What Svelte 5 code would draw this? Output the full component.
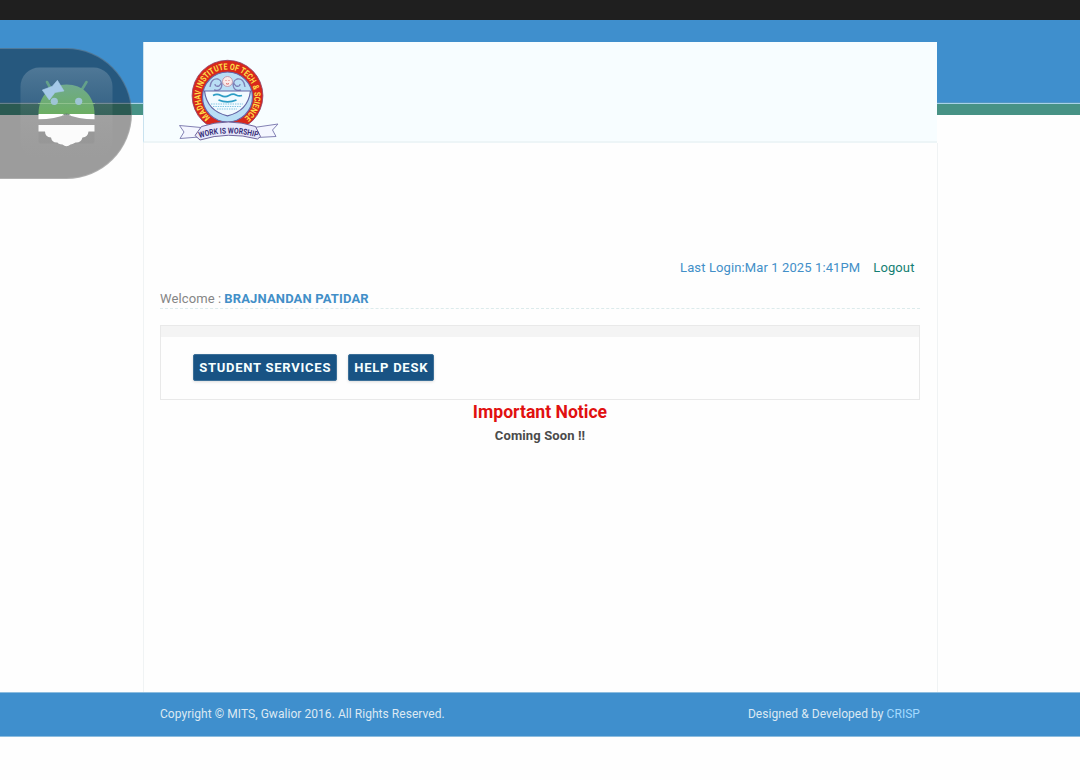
<script>
  const menu = ['Student Services', 'Help Desk'];
</script>

<div class="page">
  <div class="status"></div>
  <div class="band"></div>
  <div class="stripe"></div>

  <main>
    <header>
      <svg class="crest" viewBox="176 56 106 86" width="106" height="86">
        <defs>
          <path id="ringText" d="M210.2 117.2 A27 27 0 1 1 244.8 117.2" />
          <path id="motto" d="M199.5 138 Q228 129 258.5 137.7" />
        </defs>
        <circle cx="227.5" cy="95.700" r="35.4" fill="#d8271c" stroke="#8b4068" stroke-width=".8" />
        <circle cx="227.5" cy="97" r="25" fill="#b9def5" stroke="#6664a8" stroke-width="1.2" />
        <path d="M210 87q1-9 8-8 6 3 1 7-4 1-4-2M245 87q-1-9-8-8-6 3-1 7 4 1 4-2M214 90q8 2 8-7M241 90q-8 2-8-7" fill="none" stroke="#7d80b7" stroke-width="1.3" />
        <circle cx="227.5" cy="81.5" r="5" fill="#fae9e8" stroke="#b888a0" stroke-width=".8" />
        <path d="M225.6 80.5h.8M228.6 80.5h.8M226 83.6q1.5 1 3 0" stroke="#d9534b" stroke-width=".9" fill="none" />
        <path d="M204.5 91H250.5Q248 111 227.5 115.8 207 111 204.5 91Z" fill="#f1faff" stroke="#6465a4" stroke-width="1.2" />
        <path d="M213 95.5q4-2.2 8 0t8 0 7-.6 6 .6M218.5 100q9 3.8 18 0" fill="none" stroke="#2d9dc5" stroke-width="1.7" />
        <path d="M211 104H243M213 106.5H241M217 109H237" stroke="#7fc3e2" stroke-dasharray="1.4 1" stroke-width="1.1" />
        <text font-size="8.6" font-weight="700" fill="#ffe04a"><textPath href="#ringText" textLength="132" lengthAdjust="spacingAndGlyphs">MADHAV INSTITUTE OF TECH &amp; SCIENCE</textPath></text>
        <path d="M179.5 125.5L201 127.5 199 137 180 138.5 184 132ZM278 124L254 127.5 257 137.5 276 136.5 272.5 130Z" fill="#f4f6ff" stroke="#8381b4" stroke-width="1" />
        <path d="M201.5 126.5Q228 117.5 255.5 126.5L260.5 136.5 257.5 139Q228 131 200 140L195 135.5Z" fill="#e7e8fb" stroke="#6f659d" stroke-width="1" />
        <text font-size="8.2" font-weight="700" fill="#372f79"><textPath href="#motto" textLength="59" lengthAdjust="spacingAndGlyphs">WORK IS WORSHIP</textPath></text>
      </svg>
    </header>

    <section class="content">
      <div class="session"><span>Last Login:Mar 1 2025 1:41PM</span><a href="#logout">Logout</a></div>
      <div class="welcome"><span>Welcome :</span><b>BRAJNANDAN PATIDAR</b></div>
      <div class="panel">
        <div class="panel-top"></div>
        <nav>
          {#each menu as item}<button>{item}</button>{/each}
        </nav>
      </div>
      <h1>Important Notice</h1>
      <p>Coming Soon !!</p>
    </section>
  </main>

  <footer>
    <span class="copy">Copyright © MITS, Gwalior 2016. All Rights Reserved.</span>
    <span class="credit">Designed &amp; Developed by <a href="#crisp">CRISP</a></span>
  </footer>

  <div class="bubble">
    <svg viewBox="20 67 93 93" width="93" height="93">
      <defs>
        <linearGradient id="tile" x1="0" y1="0" x2="0" y2="1">
          <stop offset="0" stop-color="#fff" stop-opacity=".19" />
          <stop offset=".5" stop-color="#ddd" stop-opacity=".08" />
          <stop offset="1" stop-color="#999" stop-opacity=".04" />
        </linearGradient>
        <linearGradient id="head" x1="0" y1="0" x2="0" y2="1">
          <stop offset="0" stop-color="#70aa8e" />
          <stop offset="1" stop-color="#6cae62" />
        </linearGradient>
      </defs>
      <rect x="20.5" y="67.5" width="92" height="92" rx="19" fill="url(#tile)" />
      <path d="M47 82l5 9M86.5 82l-5.5 9" stroke="#64a18a" stroke-width="2.6" stroke-linecap="round" />
      <path d="M38.5 114C38.5 96 50 84.5 66.5 84.5S94.5 96 94.5 114Z" fill="url(#head)" />
      <path d="M38 103.5H95" stroke="#9cca98" stroke-opacity=".7" />
      <circle cx="54.3" cy="101.3" r="3.6" fill="#9ec5d5" /><circle cx="78.7" cy="101.3" r="3.6" fill="#9ec5d5" />
      <path d="M42.3 90L52.3 86.3 57.4 80.3 64 91 55 92.5 49.3 100Z" fill="#a5c9e8" stroke="#a5c9e8" stroke-width=".6" stroke-linejoin="round" />
      <path d="M38.5 125H94.5V141Q94.5 143.5 92 143.5H41Q38.5 143.5 38.5 141Z" fill="#777" fill-opacity=".13" />
      <path d="M38.5 114H94.5V119.3Q78 119.3 66.5 114.2 55 119.3 38.5 119.3Z" fill="#fff" />
      <path d="M62 115.4Q66.5 111.5 71 115.4L66.5 114.2Z" fill="#65776a" />
      <path d="M38.5 125H94.5V131.5H88.5Q88 137 82.5 137.5 81 143 75.5 142.5 72 144.5 70.5 144.5 66.5 148 62.5 144.5 58 144 57.5 142.5 52 143 51 137.5 45 137 45 131.5H38.5Z" fill="#fbfbfb" />
    </svg>
  </div>
</div>

<style>
  :global(body) { margin: 0; background: #fff; }
  .page { position: relative; height: 780px; overflow: hidden; font-family: Roboto, sans-serif; background: #fefefe; }
  .status { height: 20px; background: #1f1f1f; }
  .band { height: 82px; background: #3f8fcd; border-bottom: 1px solid #5296c5; }
  .stripe { height: 11px; background: #479285; border-top: 1px solid #a7d2e7; }
  main { display: flex; flex-direction: column; position: relative; width: 795px; height: 650px; margin: -73px 0 0 143px; }
  header { box-sizing: border-box; height: 101px; margin-right: 1px; padding: 14px 0 0 32px; background: #f7fdff; border-left: 1px solid #c9e2ef; border-bottom: 2px solid #edf5f7; }
  .crest { display: block; }
  .content { flex: 1; padding: 0 17px 0 16px; border: 1px solid #f0f3f4; border-width: 0 1px; }
  .session { display: flex; justify-content: flex-end; height: 41px; padding: 116px 5.500px 0 0; gap: 13px; font-size: 13px; line-height: 18px; letter-spacing: .11px; color: #428fc8; }
  .session a { color: #147f73; }
  a { text-decoration: none; }
  .welcome { display: flex; gap: 3px; height: 18px; margin-top: -10px; border-bottom: 1px dashed #dcebec; font-size: 13px; line-height: 18px; color: #858585; letter-spacing: .11px; }
  .welcome b { color: #428fc8; letter-spacing: .15px; }
  .panel { box-sizing: border-box; height: 75px; margin-top: 16px; border: 1px solid #e9e9e9; }
  .panel-top { height: 11px; background: #f4f4f4; }
  nav { display: flex; gap: 11.5px; padding: 17px 0 0 32.4px; }
  button { box-sizing: border-box; height: 27px; padding: 0 4.800px; border: 1px solid #3b6f98; border-radius: 2px; background: #185384; box-shadow: 0 1px 3px #0002; color: #f6ffff; font: 700 13px/24px Roboto, sans-serif; letter-spacing: .75px; text-transform: uppercase; white-space: nowrap; }
  h1 { margin: 0; font-size: 17.6px; line-height: 24px; font-weight: 700; text-align: center; color: #e11010; }
  p { margin: 0; font-size: 13px; line-height: 24px; font-weight: 700; letter-spacing: .12px; text-align: center; color: #4b4b4b; }
  footer { display: flex; justify-content: space-between; box-sizing: border-box; height: 45px; padding: 0 160px; border: 1px solid #8dbddf; border-width: 1px 0; background: #3f8fcd; color: #dce9f3; font-size: 12px; line-height: 43px; letter-spacing: .05px; }
  footer a { color: #a4daff; }
  .bubble { position: absolute; top: 48px; left: 0; box-sizing: border-box; width: 132px; height: 131px; padding: 18px 0 0 20px; border: 1.5px solid #ffffff30; border-left: 0; border-radius: 0 66px 66px 0; background: #00000062; }
  .bubble svg { display: block; }
</style>
